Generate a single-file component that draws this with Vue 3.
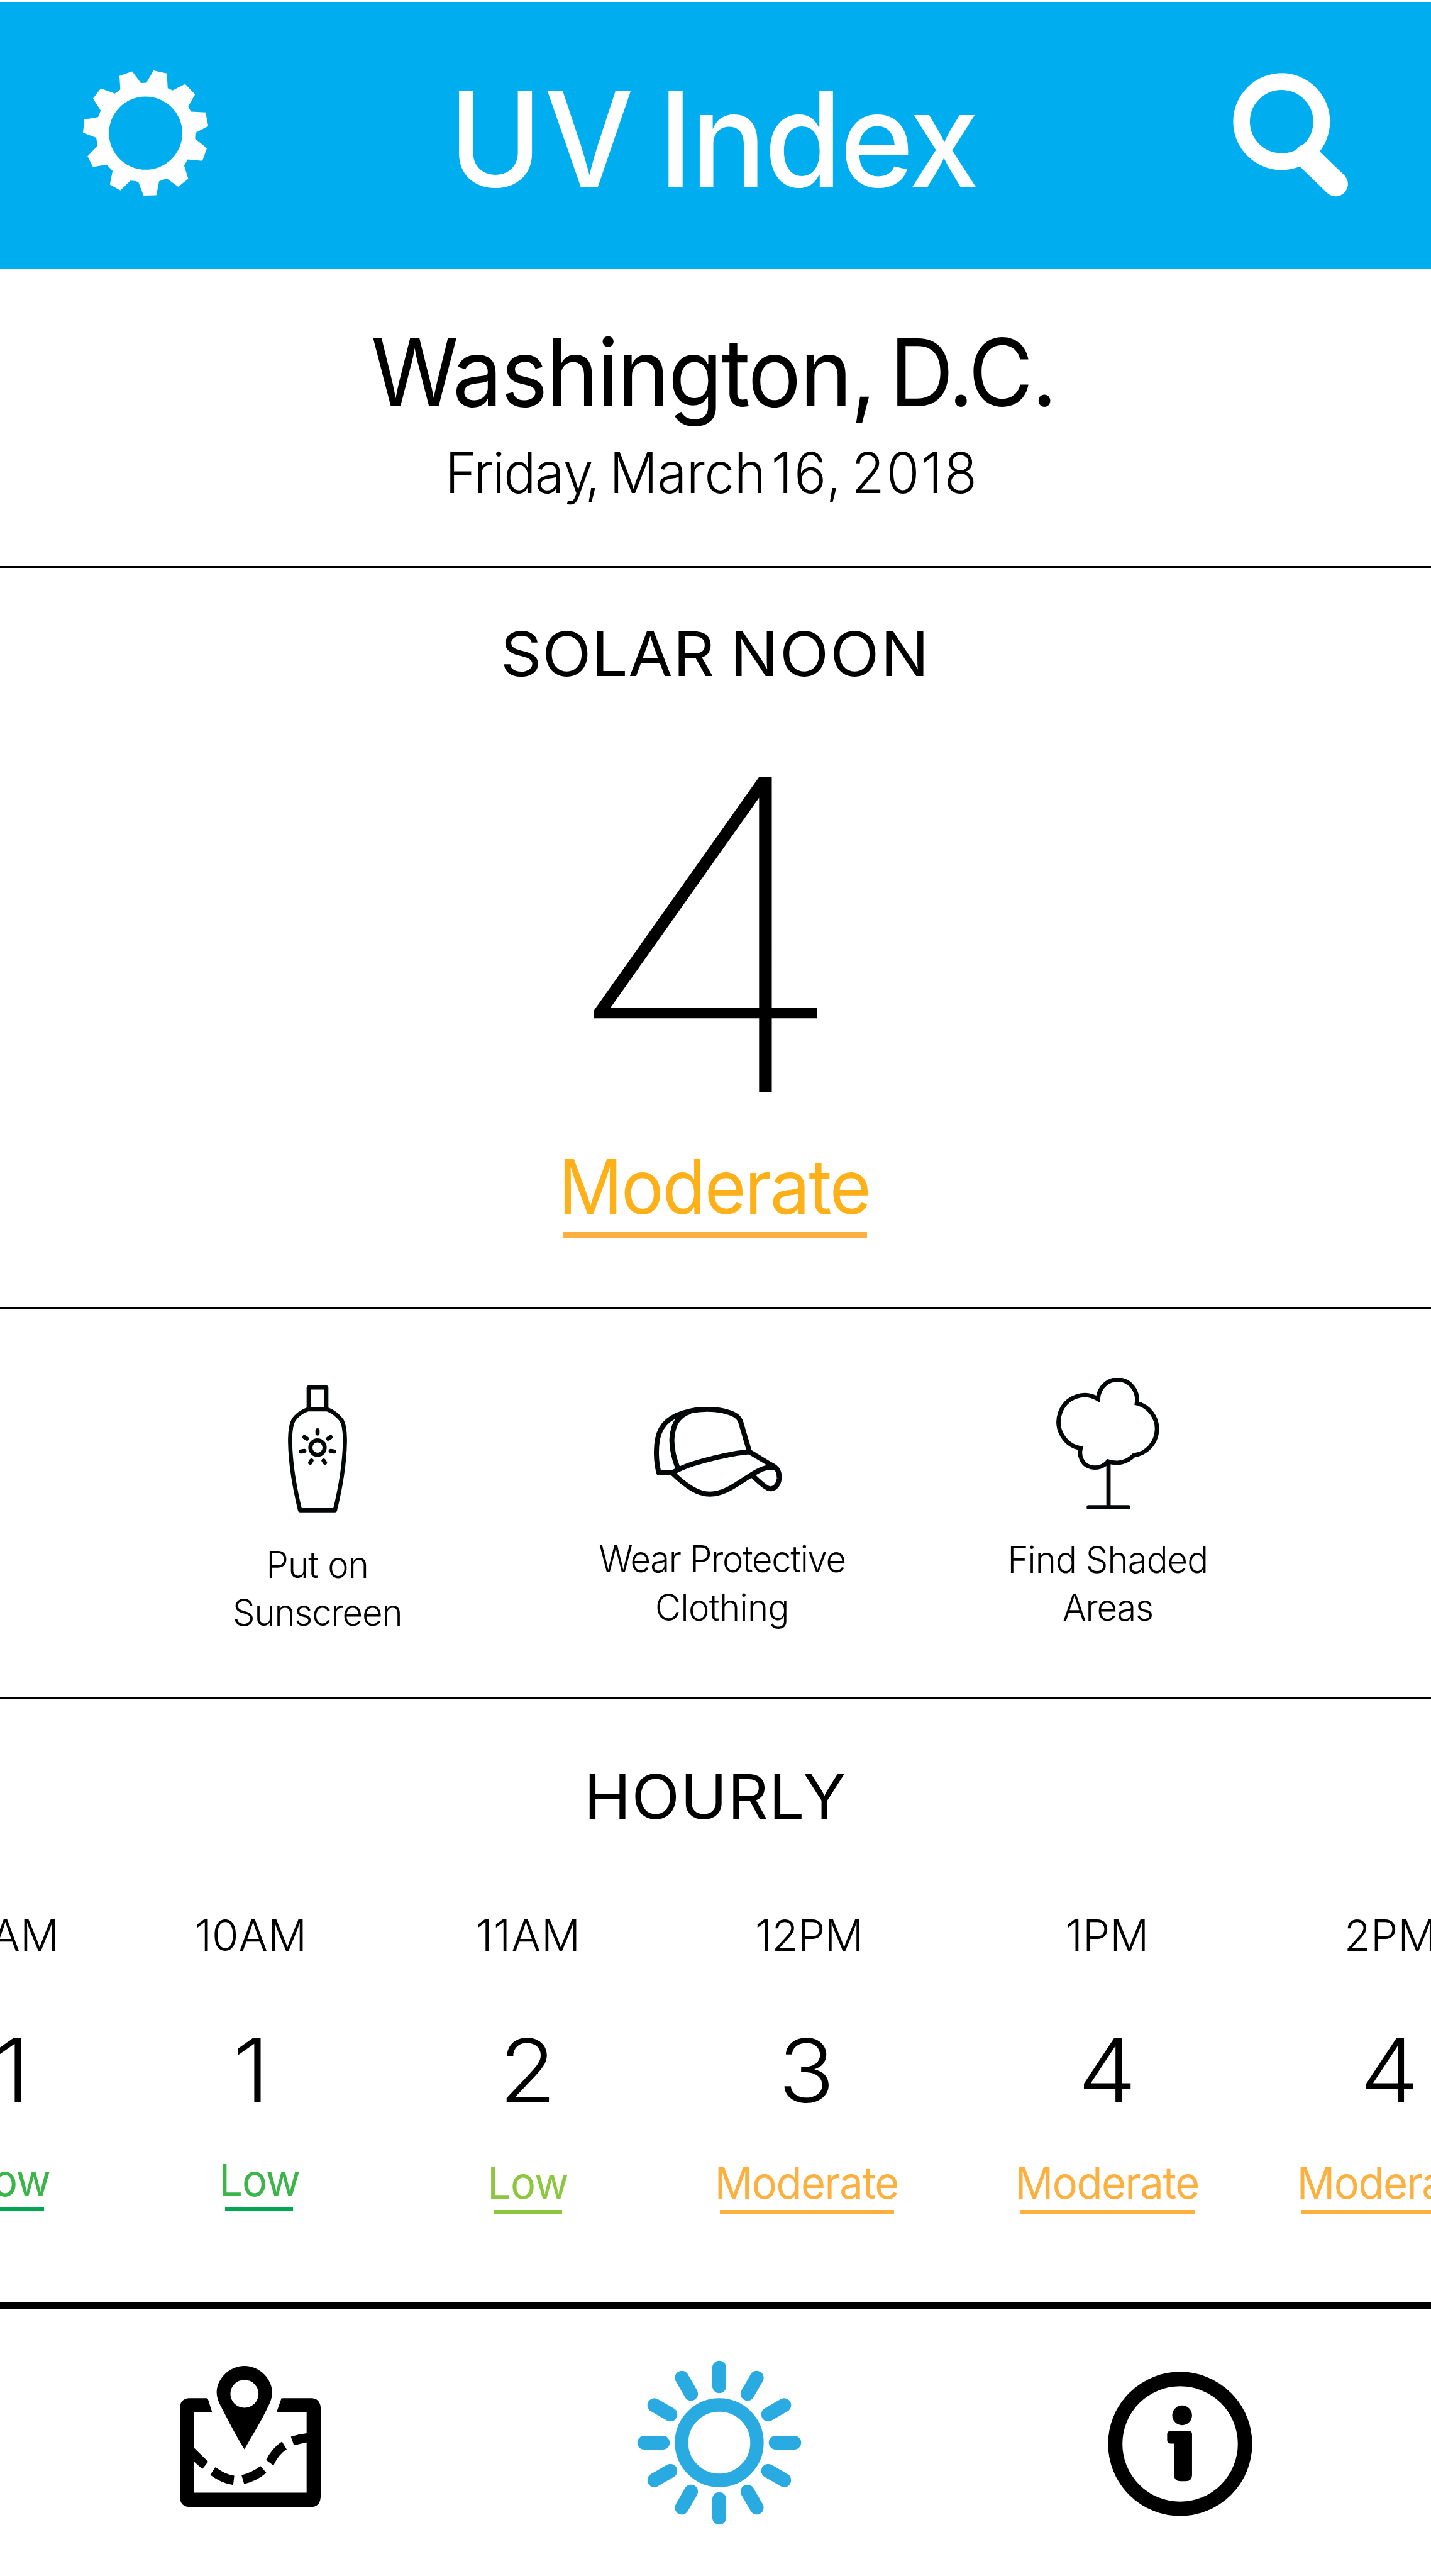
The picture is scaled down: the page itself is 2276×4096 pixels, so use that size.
<script setup>
const hours = [
  { time: '9AM', index: 1, level: 'Low', tone: 'green' },
  { time: '10AM', index: 1, level: 'Low', tone: 'green' },
  { time: '11AM', index: 2, level: 'Low', tone: 'lime' },
  { time: '12PM', index: 3, level: 'Moderate', tone: 'amber' },
  { time: '1PM', index: 4, level: 'Moderate', tone: 'amber' },
  { time: '2PM', index: 4, level: 'Moderate', tone: 'amber' },
]
const rays = Array.from({ length: 12 }, (_, i) => i * 30)
</script>

<template>
  <main class="screen">
    <header class="header">
      <svg class="gear" viewBox="182 397 276 706" preserveAspectRatio="none">
        <path
          fill="#fff"
          fill-rule="evenodd"
          d="M290 402 262 428 264 504 252 527 221 498 204 556 221 623 215 660 185 674 182 748 211 777 214 822 192 881 204 942 234 928 247 964 241 1041 264 1074 286 1019Q300 1020 304 1029L315 1103 343 1101 349 1022 366 1006 391 1053 413 1008 404 934 412 899 444 907 454 836 428 782 429 748 457 711 451 634 419 629 413 600 428 532 406 473 379 510 368 497 366 414 337 397 321 467 309 468ZM319.5 544A80.500 206.500 0 1 0 319.500 957A80.500 206.500 0 1 0 319.500 544Z"
        />
      </svg>
      <h1 class="title"><span class="uv">UV</span> Index</h1>
      <svg class="search" viewBox="2660 155 252 271" fill="none" stroke="#fff">
        <circle cx="2767.500" cy="262.500" r="86.300" stroke-width="36" />
        <path d="M2822 337 2884 397" stroke-width="53" stroke-linecap="round" />
      </svg>
    </header>

    <section class="place">
      <h2 class="city"><span class="city-name">Washington,</span> <span class="city-state">D.C.</span></h2>
      <p class="date">Frida<span class="y">y</span><span class="weekday-end">,</span> <span class="month">March</span> <span class="day">16,</span> <span class="year">2018</span></p>
    </section>

    <section class="noon">
      <h3 class="noon-title"><span class="solar">SOLAR</span> <span class="noon-word">NOON</span></h3>
      <div class="noon-index">4</div>
      <a class="noon-level">Moderate</a>
      <div class="noon-rule"></div>
    </section>

    <section class="tips">
      <div class="tip sunscreen">
        <svg class="bottle" viewBox="427 204 382 614" preserveAspectRatio="none">
          <path d="M561 317V214H675V317M556 319C520 328 480 350 462 372C446 393 440 430 441 480C444 590 470 700 505 807H731C766 700 792 590 795 480C796 430 790 393 774 372C750 350 715 328 680 319Z" />
          <ellipse cx="618" cy="504" rx="46" ry="35" />
          <path d="M618 421V436M533 453 549 461M703 453 687 461M510 523 533 520M726 523 703 520M579 567 571 577M657 567 666 577" />
        </svg>
        <p class="tip-text"><span class="t1">Put on</span><span class="t2">Sunscreen</span></p>
      </div>
      <div class="tip clothing">
        <svg class="cap" viewBox="391 309 667 436" preserveAspectRatio="none">
          <path d="M417 629C400 570 402 505 410 465C425 390 480 350 580 329C640 317 700 319 745 327C800 338 830 352 842 380L888 527C840 530 780 540 700 558C640 572 560 590 486 629ZM515 606C480 520 480 460 492 420C503 375 530 348 575 333M888 527 1000 590C1035 605 1044 625 1043 655C1040 690 1015 710 990 705C965 698 930 665 900 638M486 629C560 695 620 732 682 732C770 730 830 675 915 629C960 605 985 600 1015 603" />
        </svg>
        <p class="tip-text"><span class="t3">Wear Protective</span><span class="t4">Clothing</span></p>
      </div>
      <div class="tip shade">
        <svg class="tree" viewBox="473 168 579 636" preserveAspectRatio="none">
          <path class="crown" d="M611 508A147 129 0 1 1 709 270A110.300 98 0 1 1 928 290A150 128.500 0 0 1 912 542C875 575 820 588 765 572C740 600 700 605 670 600C620 590 598 545 611 508Z" />
          <path d="M768 578V795M656 794H880" />
        </svg>
        <p class="tip-text"><span class="t5">Find Shaded</span><span class="t6">Areas</span></p>
      </div>
    </section>

    <section class="hourly">
      <h3 class="hourly-title">HOURLY</h3>
      <div class="hours">
        <div v-for="h in hours" :key="h.time" class="hour" :class="[h.tone, 'h' + h.time]">
          <span class="time">{{ h.time }}</span>
          <span class="index">{{ h.index }}</span>
          <div class="level"><span class="level-text">{{ h.level }}</span></div>
        </div>
      </div>
    </section>

    <nav class="nav">
      <svg class="map" viewBox="174 425 913 768" preserveAspectRatio="none">
        <path
          fill-rule="evenodd"
          d="M593 879C540 810 490 725 437 640C420 612 413 590 413 570C413 500 490 425 593 425C696 425 773 500 773 570C773 590 766 612 750 640C700 730 646 800 593 879ZM593 501A91 76 0 1 0 593 653A91 76 0 1 0 593 501Z"
        />
        <path d="M384 678H264V1116H996V678H801L833 601H1032Q1080 604 1087 650V1140Q1083 1188 1037 1193H230Q180 1190 174 1143V652Q178 606 230 601H352L356 605Z" />
        <path d="M262 868 358 947 320 987 262 944ZM405 977Q470 1018 527 1023L520 1074Q445 1066 371 1019ZM574 1021Q640 1006 697 971L735 1008Q670 1054 591 1069ZM836 837Q772 872 733 938L781 968Q815 905 867 880ZM894 811Q945 796 998 792V842L914 858Z" />
      </svg>
      <svg class="sun" viewBox="-178 -178 356 356" fill="none" stroke="#29abe2">
        <circle r="81.500" stroke-width="29" />
        <path v-for="a in rays" :key="a" d="M0-122V-162" stroke-width="30" stroke-linecap="round" :transform="`rotate(${a})`" />
      </svg>
      <svg class="info" viewBox="2392 5120 312 312">
        <circle cx="2548" cy="5276" r="140" fill="none" stroke="#000" stroke-width="31" />
        <circle cx="2552.300" cy="5214.300" r="21.300" />
        <path d="M2527 5248.200H2567Q2573.700 5248.200 2573.700 5255V5344Q2573 5356 2560 5356.500H2549Q2535.500 5356 2535 5344V5275.200H2527Q2520 5275 2520 5268V5255Q2520 5248.500 2527 5248.200Z" />
      </svg>
    </nav>
  </main>
</template>

<style>
body {
  margin: 0;
}
</style>

<style scoped>
.screen {
  width: 2276px;
  height: 4096px;
  overflow: hidden;
  background: #fff;
  color: #000;
  font-family: Inter, "Noto Sans", sans-serif;
  display: flex;
  flex-direction: column;
}
h1, h2, h3, p {
  margin: 0;
}
svg {
  display: block;
  flex: none;
}
section, header, nav {
  box-sizing: border-box;
  flex: none;
}

/* Header */
.header {
  margin-top: 3px;
  height: 424px;
  padding: 0 131px 0 132px;
  background: #00aeef;
  display: flex;
  align-items: flex-start;
}
.gear {
  width: 200px;
  height: 199px;
  margin-top: 109px;
}
.title {
  margin: 142px 0 0 382px;
  color: #fff;
  font-size: 208.600px;
  font-weight: 500;
  line-height: 152px;
  letter-spacing: -3.570px;
  white-space: nowrap;
  transform: scaleX(0.96);
  transform-origin: left;
}
.uv {
  margin-right: -15px;
  letter-spacing: 3.900px;
}
.search {
  width: 186px;
  height: 200px;
  margin: 111px 0 0 auto;
}

/* Place and date */
.place {
  height: 476px;
  padding-top: 110.500px;
  border-bottom: 3px solid #000;
}
.city {
  margin-left: 589.500px;
  font-size: 148.900px;
  font-weight: 400;
  line-height: 108px;
  letter-spacing: -3.600px;
  white-space: nowrap;
  transform: scaleX(0.95);
  transform-origin: left;
}
.city-name {
  margin-right: -13.500px;
  letter-spacing: -2.600px;
}
.city-state {
  letter-spacing: -2.700px;
}
.date {
  margin: 73px 0 0 707.600px;
  font-size: 89.700px;
  font-weight: 300;
  line-height: 65px;
  letter-spacing: -1.860px;
  white-space: nowrap;
  transform: scaleX(0.95);
  transform-origin: left;
}
.y { letter-spacing: -13.500px; }
.weekday-end { margin-right: -6px; }
.month {
  margin-right: -13.500px;
  letter-spacing: -0.500px;
}
.day {
  margin-right: -9px;
  letter-spacing: 2.800px;
}
.year { letter-spacing: 3.100px; }

/* Solar noon */
.noon {
  height: 1179px;
  padding-top: 100.500px;
  border-bottom: 3px solid #000;
  display: flex;
  flex-direction: column;
  align-items: flex-start;
}
.noon-title {
  margin-left: 796px;
  font-size: 97.400px;
  font-weight: 400;
  line-height: 71px;
  letter-spacing: 0.550px;
  white-space: nowrap;
  transform: scaleX(1.05);
  transform-origin: left;
}
.solar { margin-right: -5px; }
.noon-word { letter-spacing: 1.900px; }
.noon-index {
  margin: 161.500px 0 0 887px;
  font-size: 687.600px;
  font-weight: 100;
  line-height: 500px;
  -webkit-text-stroke: 1.500px #000;
  transform: scaleX(1.147);
  transform-origin: left;
}
.noon-level {
  margin: 107.500px 0 0 888.300px;
  color: #fdb017;
  font-size: 119px;
  font-weight: 400;
  line-height: 87px;
  letter-spacing: -2.270px;
  transform: scaleX(0.95);
  transform-origin: left;
}
.noon-rule {
  width: 483px;
  height: 9px;
  margin: 28px 0 0 896px;
  background: #fbb040;
}

/* Protection tips */
.tips {
  height: 620px;
  padding-left: 225px;
  border-bottom: 3px solid #000;
  display: flex;
}
.tip {
  display: flex;
  flex-direction: column;
  align-items: center;
}
.tip svg {
  fill: none;
  stroke: #030707;
  stroke-linejoin: round;
  stroke-linecap: round;
}
.tip path, .tip ellipse {
  vector-effect: non-scaling-stroke;
}
.sunscreen { width: 560px; }
.clothing { width: 727px; }
.shade { width: 499px; }
.bottle {
  width: 94px;
  height: 202px;
  margin-top: 120.600px;
  stroke-width: 6.600px;
}
.cap {
  width: 204px;
  height: 143px;
  margin: 155px 13px 0 0;
  stroke-width: 8px;
}
.tree {
  width: 163px;
  height: 209px;
  margin-top: 109px;
  stroke-width: 6.800px;
}
.tree .crown {
  stroke-linejoin: miter;
}
.tip-text {
  display: flex;
  flex-direction: column;
  align-items: center;
  font-size: 59.200px;
  font-weight: 300;
  line-height: 76.600px;
  white-space: nowrap;
  transform: scaleX(0.95);
}
.sunscreen .tip-text { margin-top: 45px; }
.clothing .tip-text { margin-top: 61px; }
.shade .tip-text { margin-top: 41.500px; }
.t1 { letter-spacing: -0.860px; }
.t2 { letter-spacing: -1.220px; }
.t3 { letter-spacing: -1.410px; }
.t4 { letter-spacing: -0.600px; }
.t5 { letter-spacing: -0.950px; }
.t6 { letter-spacing: -1.330px; }

/* Hourly forecast */
.hourly {
  height: 959px;
  padding-top: 118.500px;
}
.hourly-title {
  margin-left: 929.400px;
  font-size: 98.200px;
  font-weight: 400;
  line-height: 71px;
  letter-spacing: 1px;
  transform: scaleX(1.02);
  transform-origin: left;
}
.hours {
  display: flex;
  margin: 160px 0 0 -171.500px;
}
.hour {
  flex: none;
  width: 381px;
  display: flex;
  flex-direction: column;
  align-items: center;
}
.h11AM { width: 498px; }
.h12PM { width: 389px; }
.h1PM { width: 567px; }
.h2PM { width: 328px; }
.time {
  font-size: 68.900px;
  font-weight: 300;
  line-height: 50px;
}
.h10AM .time { margin-right: 2px; }
.h11AM .time { margin-left: 2px; letter-spacing: 1.300px; }
.h12PM .time { margin-left: 8px; letter-spacing: -0.700px; }
.h2PM .time { margin-left: 6px; }
.h2PM .index { margin-left: 4px; }
.index {
  margin-top: 139px;
  font-size: 140.300px;
  font-weight: 300;
  line-height: 102px;
  transform: scaleX(1.055);
}
.level {
  width: 277px;
  margin-top: 102px;
  padding-bottom: 18px;
  border-bottom: 6.500px solid currentColor;
  display: flex;
  justify-content: center;
}
.level-text {
  font-size: 70.400px;
  font-weight: 400;
  line-height: 51px;
  letter-spacing: -1.460px;
  transform: scaleX(0.95);
}
.green .level, .lime .level { width: 108px; }
.green .level-text, .lime .level-text { letter-spacing: -1.150px; }
.green .level {
  margin-top: 98px;
  color: #39b54a;
  border-bottom-color: #00a651;
}
.h9AM .level { margin-right: 7px; }
.h10AM .level { margin-left: 24px; }
.lime .level { color: #8dc63f; }
.amber .level { color: #fbb040; }

/* Bottom navigation */
.nav {
  height: 435px;
  border-top: 10px solid #000;
  display: flex;
  align-items: flex-start;
}
.map {
  width: 224px;
  height: 224px;
  margin: 91px 0 0 286px;
}
.sun {
  width: 262px;
  height: 262px;
  margin: 81.500px 0 0 503px;
}
.info {
  width: 230px;
  height: 230px;
  margin: 99.500px 0 0 487px;
}
</style>
